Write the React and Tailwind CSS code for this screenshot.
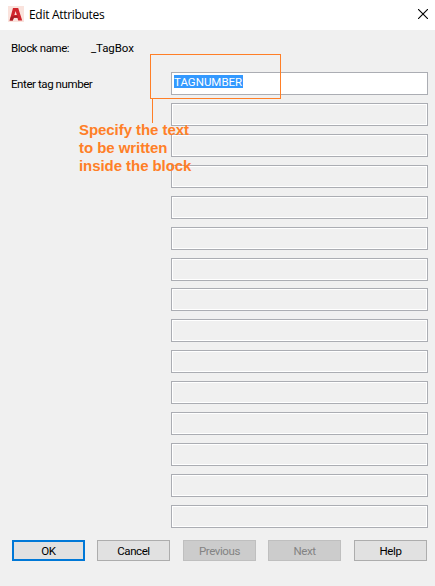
const fields = Array.from({ length: 14 }, (_, i) => i);

function TitleBar() {
  return (
    <header className="flex h-[30px] items-center bg-white pl-2 pr-[7px]">
      <svg width="16" height="16" viewBox="0 0 16 16" className="-mt-0.5 shrink-0">
        <rect width="16" height="16" fill="#fae3dd" />
        <path d="M5 2h5.2l4 12.6h-4L9.4 11.8H5.8L4.8 14.6H1.6z" fill="#d0252c" />
        <path d="M7.6 5 8.8 9H6.4z" fill="#fae3dd" />
        <path d="M1.6 14.6 3 10.8l6.2-1.2 1 2.2H5.8l-1 2.8z" fill="#a81c23" />
      </svg>
      <h1 className="ml-[5px] whitespace-nowrap font-['Open_Sans',sans-serif] text-[12px] leading-4 tracking-[-0.3px] text-black">
        Edit Attributes
      </h1>
      <button className="ml-auto" aria-label="Close">
        <svg width="10" height="10" viewBox="0 0 10 10" className="-mt-0.5 block" stroke="#000" strokeWidth="1.1">
          <path d="M0 0l10 10M10 0L0 10" />
        </svg>
      </button>
    </header>
  );
}

function Annotation() {
  return (
    <div className="pointer-events-none absolute left-[79px] top-[54px] w-[202px] text-[#ff7f27]">
      <div className="ml-[71px] h-[45px] w-[131px] border border-[#ff7f27]" />
      <div className="ml-[73px] h-6 w-px bg-[#ff7f27]" />
      <p className="-mt-0.5 whitespace-nowrap font-['Liberation_Sans',sans-serif] text-[15px] font-bold leading-[18px] tracking-[-0.06px]">
        Specify the text
        <br />
        to be written
        <br />
        inside the block
      </p>
    </div>
  );
}

const button = "h-[21px] w-[73px] text-center";
const enabled = "border border-[#adadad] bg-[#e1e1e1] leading-[20px] text-black";
const disabled = "border border-[#bfbfbf] bg-[#cccccc] leading-[20px] text-[#838383]";

export default function App() {
  return (
    <div className="relative h-[586px] w-[435px] overflow-hidden bg-[#f0f0f0] font-['Roboto',sans-serif] text-[11.5px] tracking-[-0.42px] text-black">
      <TitleBar />
      <main className="flex flex-col">
        <div className="flex h-[42px] pl-[11px] pt-[10px] leading-4">
          <span className="w-20">Block name:</span>
          <span className="tracking-[-0.1px]">_TagBox</span>
        </div>
        <div className="flex">
          <label className="w-[171px] pl-[11px] pt-1 leading-4">Enter tag number</label>
          <div className="flex h-[456px] w-[257px] flex-col">
            <div className="mb-2 h-[23px] shrink-0 border border-[#abadb3] bg-white pl-0.5 pt-0.5">
              <span className="block h-[13px] w-[69px] whitespace-nowrap bg-[#3399ff] leading-[14px] tracking-[0px] text-white">
                TAGNUMBER
              </span>
            </div>
            {fields.map((i) => (
              <div
                key={i}
                className={
                  i === 5
                    ? "mb-[7px] h-[23px] shrink-0 border border-[#abadb3] bg-white p-px"
                    : "mb-2 h-[23px] shrink-0 border border-[#abadb3] bg-white p-px"
                }
              >
                <div className="h-full bg-[#f0f0f0]" />
              </div>
            ))}
          </div>
        </div>
        <div className="mt-3 flex pl-3">
          <button className={`${button} border-2 border-[#0078d7] bg-[#e1e1e1] leading-[18px]`}>OK</button>
          <button className={`${button} ${enabled} ml-3`}>Cancel</button>
          <button className={`${button} ${disabled} ml-[13px]`}>Previous</button>
          <button className={`${button} ${disabled} ml-3`}>Next</button>
          <button className={`${button} ${enabled} ml-[13px]`}>Help</button>
        </div>
      </main>
      <Annotation />
    </div>
  );
}
